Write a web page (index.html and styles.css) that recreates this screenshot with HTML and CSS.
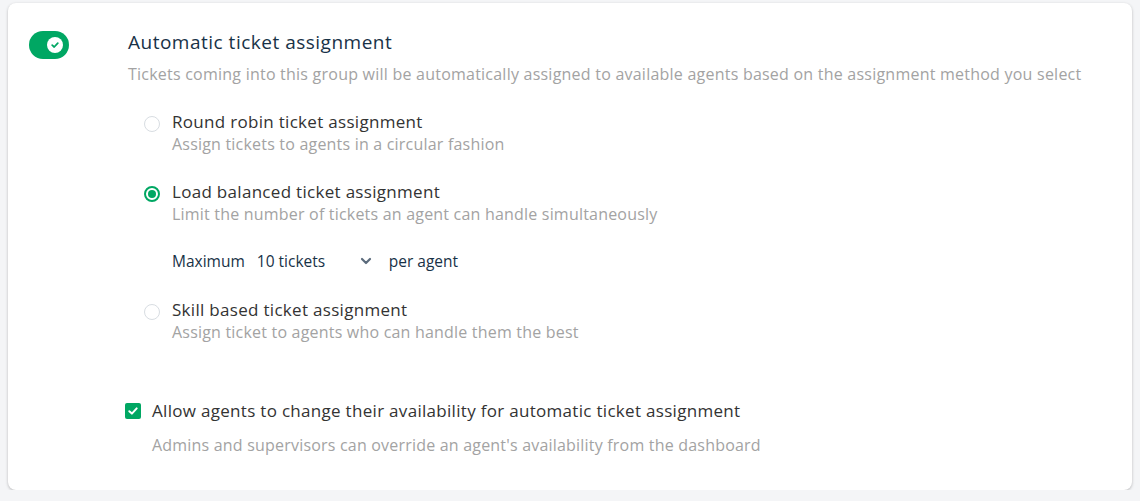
FILE: index.html
```html
<!DOCTYPE html>
<html lang="en">
<head>
    <meta charset="UTF-8">
    <meta name="viewport" content="width=device-width, initial-scale=1.0">
    <title>Automatic ticket assignment</title>
    <link rel="stylesheet" href="styles.css">
</head>
<body>
    <div class="card">
        <div class="setting">
            <div class="toggle">
                <span class="knob">
                    <svg width="10" height="10" viewBox="0 0 10 10"><path d="M2.2 5.2 L4.2 7 L7.8 3.2" fill="none" stroke="#00a763" stroke-width="1.8" stroke-linecap="round" stroke-linejoin="round"/></svg>
                </span>
            </div>
            <div class="setting-body">
                <h2 class="title">Automatic ticket assignment</h2>
                <p class="desc">Tickets coming into this group will be automatically assigned to available agents based on the assignment method you select</p>

                <div class="options">
                    <div class="option">
                        <span class="radio"></span>
                        <div>
                            <div class="label">Round robin ticket assignment</div>
                            <div class="hint">Assign tickets to agents in a circular fashion</div>
                        </div>
                    </div>
                    <div class="option">
                        <span class="radio checked"></span>
                        <div>
                            <div class="label">Load balanced ticket assignment</div>
                            <div class="hint">Limit the number of tickets an agent can handle simultaneously</div>
                        </div>
                    </div>
                    <div class="limit">
                        <span>Maximum</span>
                        <span class="select">10 tickets
                            <svg width="12" height="8" viewBox="0 0 12 8"><path d="M2 2 L6 6 L10 2" fill="none" stroke="#5b6b7c" stroke-width="2.2" stroke-linecap="round" stroke-linejoin="round"/></svg>
                        </span>
                        <span>per agent</span>
                    </div>
                    <div class="option">
                        <span class="radio"></span>
                        <div>
                            <div class="label">Skill based ticket assignment</div>
                            <div class="hint">Assign ticket to agents who can handle them the best</div>
                        </div>
                    </div>
                </div>
            </div>
        </div>

        <div class="availability">
            <div class="check-row">
                <span class="checkbox">
                    <svg width="12" height="12" viewBox="0 0 12 12"><path d="M2.3 6.2 L4.9 8.6 L9.7 3.4" fill="none" stroke="#fff" stroke-width="2" stroke-linecap="round" stroke-linejoin="round"/></svg>
                </span>
                <span class="label">Allow agents to change their availability for automatic ticket assignment</span>
            </div>
            <p class="hint">Admins and supervisors can override an agent's availability from the dashboard</p>
        </div>
    </div>
</body>
</html>
```

FILE: styles.css
```css
body {
    font-family: "Open Sans", Lato, sans-serif;
    background-color: #f4f5f7;
    margin: 0;
    padding: 3px 8px 0;
}
.card {
    background-color: #fff;
    border-radius: 8px;
    box-shadow: 0 1px 3px rgba(0, 0, 0, 0.25);
    height: 487px;
    box-sizing: border-box;
    padding: 25px 20px 0 21px;
}
.setting {
    display: flex;
}
.toggle {
    width: 40px;
    height: 28px;
    border-radius: 14px;
    background-color: #00a763;
    display: flex;
    align-items: center;
    justify-content: flex-end;
    padding-right: 6px;
    box-sizing: border-box;
    flex-shrink: 0;
    margin-top: 3px;
}
.knob {
    width: 16px;
    height: 16px;
    border-radius: 50%;
    background-color: #fff;
    display: flex;
    align-items: center;
    justify-content: center;
}
.setting-body {
    margin-left: 59px;
}
.title {
    font-size: 19px;
    letter-spacing: 0.5px;
    font-weight: normal;
    color: #183247;
    margin: 0;
    line-height: 28px;
}
.desc {
    font-size: 16px;
    letter-spacing: 0.23px;
    color: #a3a3a3;
    margin: 6px 0 0;
    line-height: 24px;
}
.options {
    padding-left: 16px;
    margin-top: 25px;
}
.option {
    display: flex;
    align-items: flex-start;
    margin-bottom: 26px;
}
.radio {
    width: 14px;
    height: 14px;
    border: 1px solid #d8dde2;
    border-radius: 50%;
    margin-top: 5px;
    margin-right: 12px;
    flex-shrink: 0;
    position: relative;
}
.radio.checked {
    border: 2px solid #00a763;
    width: 12px;
    height: 12px;
}
.radio.checked::after {
    content: "";
    position: absolute;
    top: 2px;
    left: 2px;
    width: 8px;
    height: 8px;
    border-radius: 50%;
    background-color: #00a763;
}
.label {
    font-size: 17px;
    letter-spacing: 0.3px;
    color: #333;
    line-height: 22px;
}
.hint {
    font-size: 16px;
    letter-spacing: 0.2px;
    color: #a3a3a3;
    line-height: 22px;
}
.limit {
    display: flex;
    align-items: center;
    padding-left: 28px;
    font-size: 15.5px;
    color: #183247;
    margin: -1px 0 27px;
    line-height: 22px;
}
.select {
    display: inline-flex;
    align-items: center;
    margin-left: 12px;
    width: 132px;
    justify-content: space-between;
    padding-right: 17px;
    box-sizing: border-box;
}
.availability {
    margin-top: 31px;
    padding-left: 96px;
}
.check-row {
    display: flex;
    align-items: center;
}
.checkbox {
    width: 16px;
    height: 16px;
    border-radius: 2px;
    background-color: #00a763;
    display: flex;
    align-items: center;
    justify-content: center;
    margin-right: 11px;
}
.availability .hint {
    margin: 12px 0 0 27px;
}
```
